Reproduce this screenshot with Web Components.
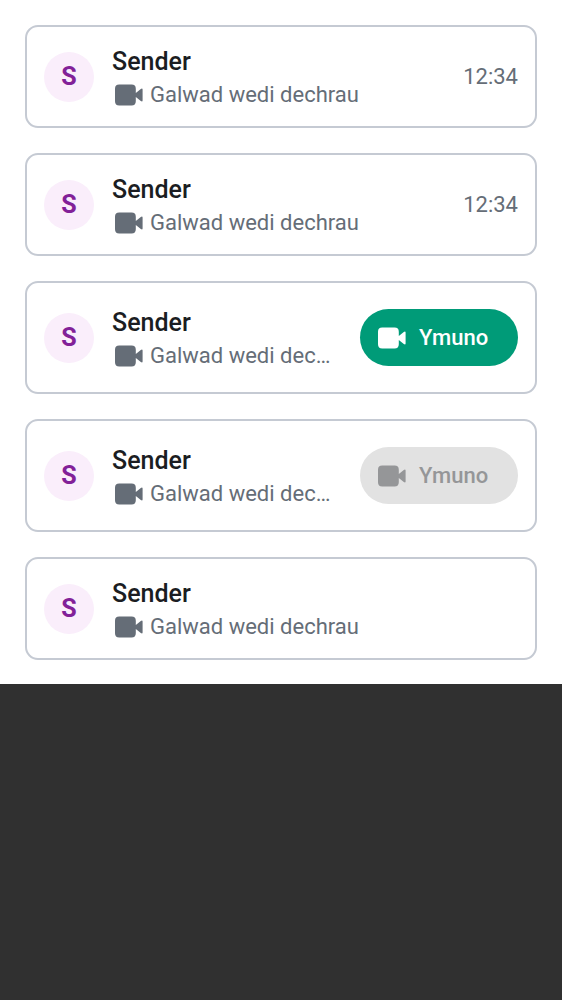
<!DOCTYPE html>
<html lang="cy">
<head>
<meta charset="utf-8">
<meta name="viewport" content="width=device-width, initial-scale=1">
<title>Galwad wedi dechrau</title>
<style>
  html { background: #303030; }
  body { margin: 0; font-family: Roboto, "Noto Sans", sans-serif; color: #1b1d22; }
</style>
</head>
<body>
<call-timeline>
  <call-notify-item sender="Sender" time="12:34"></call-notify-item>
  <call-notify-item sender="Sender" time="12:34"></call-notify-item>
  <call-notify-item sender="Sender"><join-call-button slot="action">Ymuno</join-call-button></call-notify-item>
  <call-notify-item sender="Sender"><join-call-button slot="action" disabled>Ymuno</join-call-button></call-notify-item>
  <call-notify-item sender="Sender"></call-notify-item>
</call-timeline>
<script>
class CallTimeline extends HTMLElement {
  constructor() {
    super();
    this.attachShadow({ mode: "open" }).innerHTML = `
      <style>
        :host { display: block; background: #fff; }
        main { display: flex; flex-direction: column; gap: 25px; padding: 25px 25px 24px; }
      </style>
      <main><slot></slot></main>`;
  }
}
class VideoIcon extends HTMLElement {
  constructor() {
    super();
    this.attachShadow({ mode: "open" }).innerHTML = `
      <style>
        :host { display: block; flex: none; width: 28px; height: 22px; }
        svg { display: block; }
      </style>
      <svg width="28" height="22" viewBox="0 0 28 22" fill="currentColor" aria-hidden="true">
        <path d="M4.2 .5H16.6Q20.8 .5 20.8 4.7V9L25.8 4.9Q27.6 3.8 27.6 5.6V16.4Q27.6 18.2 25.8 17.1L20.8 13V17.3Q20.8 21.5 16.6 21.5H4.2Q0 21.5 0 17.3V4.7Q0 .5 4.2 .5Z"/>
      </svg>`;
  }
}
class UserAvatar extends HTMLElement {
  constructor() {
    super();
    this.attachShadow({ mode: "open" }).innerHTML = `
      <style>
        :host { display: flex; flex: none; align-items: center; justify-content: center;
          width: 50px; height: 50px; border-radius: 50%; background: #faeefb;
          color: #822198; font-size: 25px; font-weight: 700; line-height: 52px; }
      </style>
      <slot></slot>`;
  }
}
class JoinCallButton extends HTMLElement {
  connectedCallback() {
    if (this.shadowRoot) return;
    this.attachShadow({ mode: "open" }).innerHTML = `
      <style>
        :host { display: block; margin: 10px 0; }
        button { display: flex; align-items: center; gap: 13px; width: 158px; height: 57px;
          box-sizing: border-box; margin: 0; padding: 0 18px; border: 0; border-radius: 29px;
          background: #009b78; color: #fff; font: 500 22px/31px Roboto, "Noto Sans", sans-serif; }
        button:disabled { background: #e2e2e2; color: #959698; }
      </style>
      <button type="button"><video-icon></video-icon><slot></slot></button>`;
    this.shadowRoot.querySelector("button").disabled = this.hasAttribute("disabled");
  }
}
class CallNotifyItem extends HTMLElement {
  connectedCallback() {
    if (this.shadowRoot) return;
    this.attachShadow({ mode: "open" }).innerHTML = `
      <style>
        :host { display: block; }
        article { display: flex; align-items: center; box-sizing: border-box; min-height: 103px;
          padding: 16px 17px; border: 2px solid #c5cad3; border-radius: 13px; }
        .body { flex: 1; min-width: 0; margin: 0 22px 0 18px; }
        h2, p { margin: 0; overflow: hidden; white-space: nowrap; text-overflow: ellipsis; }
        h2 { font-size: 25px; line-height: 36px; font-weight: 500; }
        .status { display: flex; align-items: center; gap: 7px; padding-left: 3px; color: #656d77; }
        p, time { font-size: 22px; line-height: 29px; font-weight: 400; }
        time { color: #656d77; }
      </style>
      <article>
        <user-avatar></user-avatar>
        <div class="body">
          <h2></h2>
          <div class="status"><video-icon></video-icon><p>Galwad wedi dechrau</p></div>
        </div>
        <slot name="action"></slot>
      </article>`;
    const root = this.shadowRoot;
    const sender = this.getAttribute("sender");
    root.querySelector("h2").textContent = sender;
    root.querySelector("user-avatar").textContent = sender[0];
    if (this.hasAttribute("time")) {
      const time = document.createElement("time");
      time.textContent = this.getAttribute("time");
      root.querySelector("article").append(time);
    }
  }
}
customElements.define("video-icon", VideoIcon);
customElements.define("user-avatar", UserAvatar);
customElements.define("join-call-button", JoinCallButton);
customElements.define("call-notify-item", CallNotifyItem);
customElements.define("call-timeline", CallTimeline);
</script>
</body>
</html>
